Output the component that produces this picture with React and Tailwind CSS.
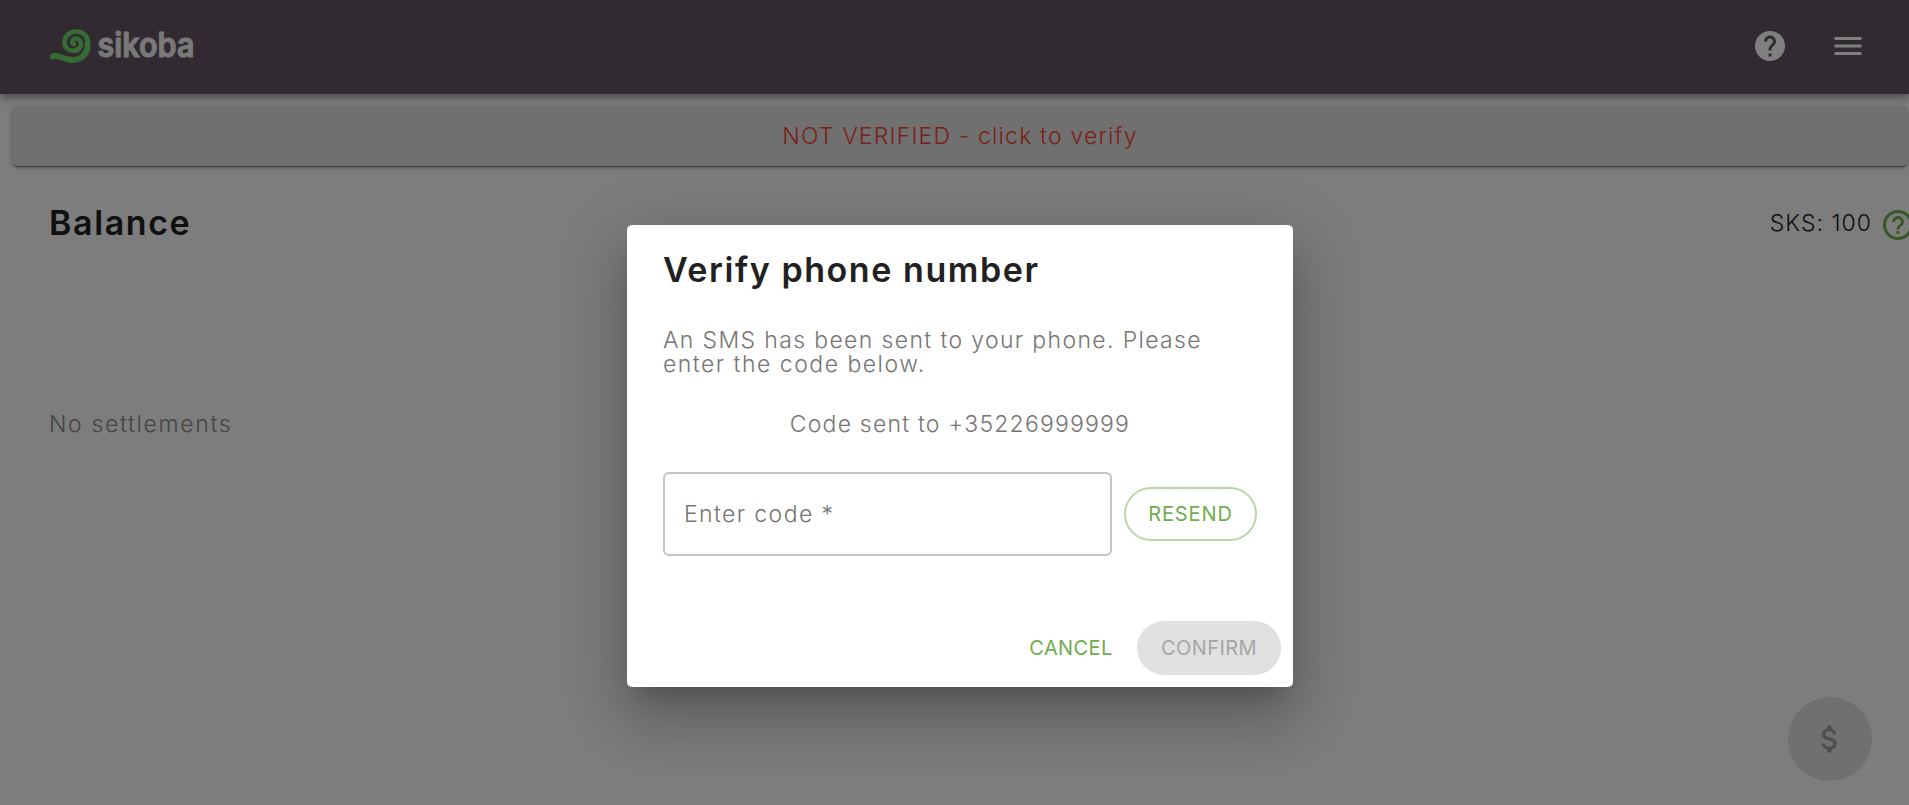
const HELP_FILLED =
  "M12 2C6.48 2 2 6.48 2 12s4.48 10 10 10 10-4.48 10-10S17.52 2 12 2zm1 17h-2v-2h2v2zm2.07-7.75-.9.92C13.45 12.9 13 13.5 13 15h-2v-.5c0-1.1.45-2.1 1.17-2.83l1.24-1.26c.37-.36.59-.86.59-1.41 0-1.1-.9-2-2-2s-2 .9-2 2H8c0-2.21 1.79-4 4-4s4 1.79 4 4c0 .88-.36 1.68-.93 2.25z";
const HELP_OUTLINE =
  "M11 18h2v-2h-2v2zm1-16C6.48 2 2 6.48 2 12s4.48 10 10 10 10-4.48 10-10S17.52 2 12 2zm0 18c-4.41 0-8-3.59-8-8s3.59-8 8-8 8 3.59 8 8-3.59 8-8 8zm0-14c-2.21 0-4 1.79-4 4h2c0-1.1.9-2 2-2s2 .9 2 2c0 2-3 1.75-3 5h2c0-2.25 3-2.5 3-5 0-2.21-1.79-4-4-4z";
const MENU = "M3 18h18v-2H3v2zm0-5h18v-2H3v2zm0-7v2h18V6H3z";

function Icon({ d, className }) {
  return (
    <svg viewBox="0 0 24 24" fill="currentColor" className={className} aria-hidden="true">
      <path d={d} />
    </svg>
  );
}

function Logo() {
  return (
    <svg viewBox="0 0 150 46" className="mt-0.5 h-[46px] w-[150px] overflow-visible">
      <path
        d="M41 19.500C41 12 36 7.500 29.500 7.500C22.500 7.500 17.500 12 17.500 18C17.500 23.500 21.500 26.800 26.300 26.800C31.500 26.800 34.300 23 33.800 18.800C33.300 15.300 30 13.800 27.500 14.800C25 15.800 24.500 19.300 27 20.200"
        fill="none"
        stroke="#6fd768"
        strokeWidth="4.600"
        strokeLinecap="round"
        strokeLinejoin="round"
      />
      <path
        d="M5.800 32.500C11 29.500 16 36 25.500 36C35 36 41 29.500 40.600 19.500"
        fill="none"
        stroke="#6fd768"
        strokeWidth="5.800"
        strokeLinecap="round"
      />
      <text
        x="50.500"
        y="33"
        fontSize="34"
        fontWeight="600"
        textLength="97"
        lengthAdjust="spacingAndGlyphs"
        fill="#f4f2f4"
        stroke="#f4f2f4"
        strokeWidth="1"
        strokeLinejoin="round"
      >
        sikoba
      </text>
    </svg>
  );
}

function VerifyDialog() {
  return (
    <div
      role="dialog"
      className="flex w-[666px] flex-col rounded-[5px] bg-white pt-[21px] pb-3 shadow-[0_17px_23px_-11px_rgba(0,0,0,0.2),0_36px_57px_5px_rgba(0,0,0,0.14),0_14px_69px_12px_rgba(0,0,0,0.12)]"
    >
      <div className="px-9">
        <h2 className="text-[34px] leading-[48px] font-semibold tracking-[1.57px] whitespace-nowrap text-[#212121]">
          Verify phone number
        </h2>
        <p className="mt-[34px] text-[23px] leading-6 font-light text-[#757575]">
          <span className="block tracking-[1.36px] whitespace-nowrap">An SMS has been sent to your phone. Please</span>
          <span className="block tracking-[1.5px] whitespace-nowrap">enter the code below.</span>
        </p>
        <p className="mt-9 text-center text-[23px] leading-6 font-light tracking-[1.2px] text-[#757575]">
          Code sent to +35226999999
        </p>
        <div className="mt-9 flex items-center gap-3">
          <div className="flex h-[84px] w-[449px] items-center rounded-[6px] border-2 border-[#c4c4c4] pl-[19px] text-[23px] font-light tracking-[1.4px] text-[#757575]">
            Enter code *
          </div>
          <button className="flex h-[54px] w-[133px] items-center justify-center rounded-full border-2 border-[#b8d6a7] text-[20px] tracking-[0.9px] text-[#70ad4e]">
            RESEND
          </button>
        </div>
      </div>
      <div className="mt-[65px] flex justify-end gap-3 pr-3">
        <button className="h-[54px] w-[108px] text-[20px] tracking-[0.4px] text-[#70ad4e]">CANCEL</button>
        <button className="h-[54px] w-36 rounded-full bg-[#e0e0e0] text-[20px] tracking-[0.4px] text-[#a6a6a6]">
          CONFIRM
        </button>
      </div>
    </div>
  );
}

export default function App() {
  return (
    <div className="relative h-[805px] w-full overflow-hidden bg-[#fafafa] font-['Inter','Liberation_Sans',sans-serif]">
      <header className="relative flex h-[94px] items-center bg-[#635763] pr-[43px] pb-0.5 pl-[47px] text-white shadow-[0_3px_6px_-1px_rgba(0,0,0,0.2),0_6px_7px_0_rgba(0,0,0,0.14),0_1px_14px_0_rgba(0,0,0,0.12)]">
        <Logo />
        <Icon d={HELP_FILLED} className="ml-auto size-9" />
        <Icon d={MENU} className="ml-[42px] size-9" />
      </header>

      <button className="mt-3 ml-3 flex h-[60px] w-[1896px] items-center justify-center rounded-[6px] bg-[#e0e0e0] text-[23px] font-light tracking-[1.17px] text-[#f44336] shadow-[0_3px_1px_-2px_rgba(0,0,0,0.3),0_2px_3px_0_rgba(0,0,0,0.2),0_1px_6px_0_rgba(0,0,0,0.12)]">
        NOT VERIFIED - click to verify
      </button>

      <main className="pl-[49px]">
        <div className="mt-[33px] flex h-12 items-center">
          <h1 className="text-[34px] leading-[48px] font-semibold tracking-[1.600px] text-[#212121]">Balance</h1>
          <span className="ml-auto text-[23px] font-light tracking-[1px] text-[#212121]">SKS: 100</span>
          <Icon d={HELP_OUTLINE} className="-mr-[7px] ml-2 size-9 shrink-0 translate-y-0.5 text-[#70ad4e]" />
        </div>
        <p className="mt-[165px] text-[23px] leading-6 font-light tracking-[1.65px] text-[#8a8a8a]">No settlements</p>
      </main>

      <button className="absolute right-[37px] bottom-6 flex size-[84px] items-center justify-center rounded-full bg-[#e0e0e0] text-[#9c9c9c]">
        <svg viewBox="0 0 24 24" fill="currentColor" className="size-9">
          <path d="M11.800 10.900c-2.270-.590-3-1.200-3-2.150 0-1.090 1.010-1.850 2.700-1.850 1.780 0 2.440.850 2.500 2.100h2.210c-.070-1.720-1.120-3.300-3.210-3.810V3h-3v2.160c-1.940.420-3.500 1.680-3.500 3.610 0 2.310 1.910 3.460 4.700 4.130 2.500.600 3 1.480 3 2.410 0 .690-.490 1.790-2.700 1.790-2.060 0-2.870-.920-2.980-2.100h-2.200c.120 2.190 1.760 3.420 3.680 3.830V21h3v-2.150c1.950-.370 3.500-1.500 3.500-3.550 0-2.840-2.430-3.810-4.700-4.400z" />
        </svg>
      </button>

      <div className="absolute inset-0 flex justify-center bg-black/50 pt-[225px]">
        <div className="ml-[11px]">
          <VerifyDialog />
        </div>
      </div>
    </div>
  );
}
